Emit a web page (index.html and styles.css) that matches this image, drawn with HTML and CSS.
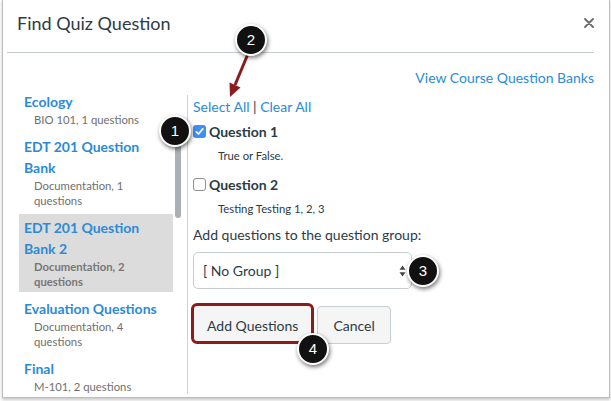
FILE: index.html
```html
<!DOCTYPE html>
<html>
<head>
<meta charset="utf-8">
<link rel="stylesheet" href="styles.css">
</head>
<body>
<div class="dialog">
  <div class="header">
    <h1 class="title">Find Quiz Question</h1>
    <svg class="close" width="10" height="10" viewBox="0 0 10 10"><path d="M1 1L9 9M9 1L1 9" stroke="#6b6b6b" stroke-width="1.8" stroke-linecap="round"/></svg>
  </div>
  <div class="body">
    <div class="toplinks"><a class="link">View Course Question Banks</a></div>
    <div class="columns">
      <div class="pane">
        <ul class="banks">
          <li class="bank"><div class="bank-name">Ecology</div><div class="bank-meta">BIO 101, 1 questions</div></li>
          <li class="bank"><div class="bank-name">EDT 201 Question Bank</div><div class="bank-meta">Documentation, 1 questions</div></li>
          <li class="bank selected"><div class="bank-name">EDT 201 Question Bank 2</div><div class="bank-meta">Documentation, 2 questions</div></li>
          <li class="bank"><div class="bank-name">Evaluation Questions</div><div class="bank-meta">Documentation, 4 questions</div></li>
          <li class="bank"><div class="bank-name">Final</div><div class="bank-meta">M-101, 2 questions</div></li>
        </ul>
        <div class="scrolltrack"><div class="thumb"></div></div>
      </div>
      <div class="main">
        <div class="selectlinks"><a class="link">Select All</a> | <a class="link">Clear All</a></div>
        <div class="question">
          <div class="q-title"><span class="cb checked"><svg width="13" height="13" viewBox="0 0 13 13"><path d="M3.3 6.8L5.5 9L9.8 3.9" fill="none" stroke="#fff" stroke-width="1.7" stroke-linecap="round" stroke-linejoin="round"/></svg></span>Question 1</div>
          <div class="q-desc">True or False.</div>
        </div>
        <div class="question">
          <div class="q-title"><span class="cb"></span>Question 2</div>
          <div class="q-desc">Testing Testing 1, 2, 3</div>
        </div>
        <div class="group-label">Add questions to the question group:</div>
        <div class="select">
          <span>[ No Group ]</span>
          <svg class="arrows" width="7" height="12" viewBox="0 0 7 12"><path d="M3.5 0.5L6.5 4.8H0.5Z M3.5 11.5L6.5 7.2H0.5Z" fill="#444"/></svg>
        </div>
        <div class="buttons">
          <button class="btn btn-add">Add Questions</button>
          <button class="btn">Cancel</button>
        </div>
      </div>
    </div>
  </div>

  <svg class="arrow" width="300" height="110" viewBox="3 0 300 110">
    <line x1="247.5" y1="55" x2="235" y2="85" stroke="#8b1c1e" stroke-width="3"/>
    <polygon points="230,97 240.5,87.5 229.5,82.5" fill="#8b1c1e"/>
  </svg>
  <div class="callout c1">1</div>
  <div class="callout c2">2</div>
  <div class="callout c3">3</div>
  <div class="callout c4">4</div>
</div>
</body>
</html>
```
FILE: styles.css
```css
* { box-sizing: border-box; }
html, body { margin: 0; padding: 0; background: #fff; overflow: hidden; }
body { font-family: Lato, "Open Sans", sans-serif; color: #2d3b45; width: 611px; height: 401px; }

.dialog {
  position: relative;
  margin: -1px 0 0 2px;
  width: 608px;
  height: 399px;
  border: 1px solid #bdbdbd;
  background: #fff;
  box-shadow: 0 2px 3px rgba(0,0,0,0.22);
  overflow: hidden;
}

.header {
  display: flex;
  justify-content: space-between;
  align-items: flex-start;
  height: 53px;
  margin: 0 15px 0 4px;
  padding: 11px 0 0 10px;
  border-bottom: 1px solid #c7cdd1;
}
.title {
  margin: 0;
  font-size: 18px;
  font-weight: 400;
  line-height: 24px;
  color: #2d3b45;
}
.close { margin-top: 7px; margin-right: 0; }

.body { padding: 0 15px 0 16px; }
.toplinks {
  margin-top: 14px;
  text-align: right;
  font-size: 14px;
  line-height: 21px;
}
.link { color: #2b8bd6; text-decoration: none; }

.columns {
  display: flex;
  height: 306px;
}

.pane { display: flex; width: 168px; }
.banks {
  list-style: none;
  margin: 0;
  padding: 0;
  width: 154px;
}
.bank { padding: 3px 5px 3px; margin-bottom: 3px; }
.bank.selected { background: #dcdcdc; }
.bank-name {
  font-size: 14px;
  font-weight: 700;
  line-height: 21px;
  color: #2b8bd6;
}
.bank-meta {
  font-size: 11.3px;
  line-height: 15px;
  color: #6f6f6f;
  padding-left: 10px;
}
.selected .bank-meta { font-weight: 700; color: #777; }

.scrolltrack { width: 6px; margin-left: 2px; }
.thumb {
  margin-top: 32px;
  width: 6px;
  height: 98px;
  border-radius: 3px;
  background: #aab0b5;
}

.main {
  flex: 1;
  margin-top: 7px;
  border-left: 1px solid #d0d0d0;
  padding: 1px 0 0 5px;
  font-size: 14px;
  line-height: 21px;
}
.selectlinks { color: #2d3b45; }

.question { padding-top: 4px; }
.question + .question { padding-top: 9px; }
.q-title {
  display: flex;
  align-items: center;
  font-weight: 700;
  font-size: 14px;
  line-height: 21px;
}
.cb {
  display: inline-block;
  width: 13px;
  height: 13px;
  margin-right: 3px;
  border: 1px solid #8f8f8f;
  border-radius: 3px;
  background: #fff;
}
.cb.checked { border: none; background: #3d8ff5; }
.cb svg { display: block; }
.q-desc {
  margin-top: 5px;
  padding-left: 25px;
  font-size: 11.3px;
  line-height: 18px;
}

.group-label { margin-top: 6px; }
.select {
  display: flex;
  align-items: center;
  justify-content: space-between;
  margin-top: 7px;
  width: 219px;
  height: 37px;
  padding: 0 5px 0 9px;
  border: 1px solid #c7cdd1;
  border-radius: 5px;
  background: #fff;
  font-size: 14px;
}
.arrows { margin-top: 1px; }

.buttons {
  display: flex;
  align-items: flex-end;
  gap: 3px;
  margin-top: 14px;
}
.btn {
  height: 38px;
  padding: 0 15px;
  border: 1px solid #c7cdd1;
  border-radius: 4px;
  background: #f5f5f5;
  color: #2d3b45;
  font-family: Lato, "Open Sans", sans-serif;
  font-size: 14px;
}
.btn-add {
  height: 41px;
  margin-left: -2px;
  padding: 0 13px;
  border: 3px solid #8b1c1e;
  border-radius: 6px;
  padding-top: 3px;
}

.arrow { position: absolute; left: 0; top: 0; }
.callout {
  position: absolute;
  width: 32px;
  height: 32px;
  border: 2px solid #fff;
  border-radius: 50%;
  background: #111;
  color: #fff;
  font-family: "Liberation Sans", Arial, sans-serif;
  font-size: 15px;
  line-height: 28px;
  text-align: center;
  box-shadow: 1px 2px 4px rgba(0,0,0,0.55);
}
.c1 { left: 156px; top: 115px; }
.c2 { left: 232px; top: 24px; }
.c3 { left: 404px; top: 255px; }
.c4 { left: 294px; top: 333px; }
```
